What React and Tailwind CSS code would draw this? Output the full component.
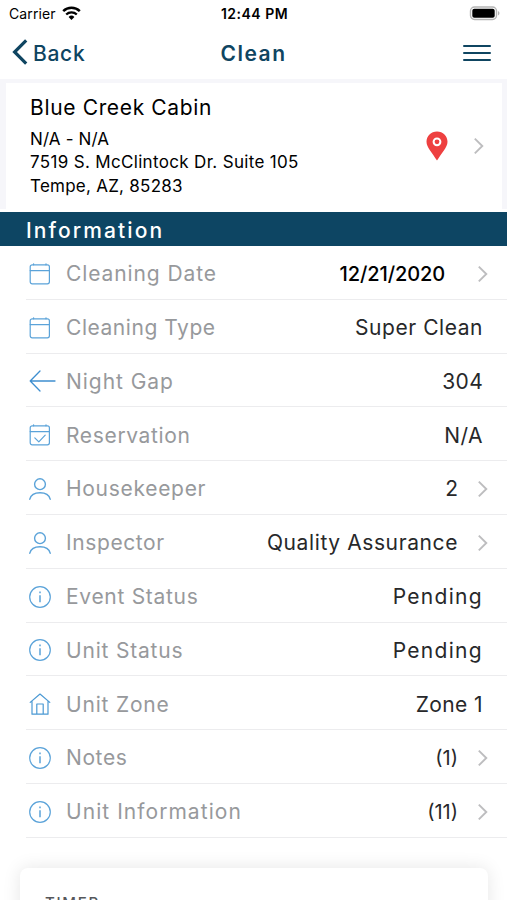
import React from 'react';

const CalendarIcon = ({ checked }) => (
    <svg width="22" height="22" viewBox="0 0 22 22" fill="none" stroke="#5ba3d9" strokeWidth="1.2" strokeLinecap="round" strokeLinejoin="round">
        <rect x="1.2" y="1.8" width="19.2" height="19" rx="2" />
        <path d="M1.2 7.6h19.2M4.6 .8v1M17 .8v1" />
        {checked && <path d="M5.8 13.8l4 4 6.4-6.6" />}
    </svg>
);

const ArrowIcon = () => (
    <svg width="27" height="22" viewBox="0 0 27 22" fill="none" stroke="#3f8fd0" strokeWidth="1.3" strokeLinecap="round" strokeLinejoin="round">
        <path d="M11 1L1.2 11 11 21M1.2 11h24.8" />
    </svg>
);

const PersonIcon = () => (
    <svg width="22" height="22" viewBox="0 0 22 22" fill="none" stroke="#5ba3d9" strokeWidth="1.4" strokeLinecap="round">
        <circle cx="11" cy="6.2" r="5.4" />
        <path d="M.8 21.2c1-4 5-6.4 10.2-6.4s9.2 2.4 10.2 6.4" />
    </svg>
);

const InfoIcon = () => (
    <svg width="22" height="22" viewBox="0 0 22 22" fill="none" stroke="#5ba3d9" strokeWidth="1.2">
        <circle cx="11" cy="11" r="10.3" />
        <path d="M11 9.2v7M11 5.6v1.7" strokeWidth="1.5" />
    </svg>
);

const HouseIcon = () => (
    <svg width="22" height="22" viewBox="0 0 22 22" fill="none" stroke="#4b99d4" strokeWidth="1.2" strokeLinecap="round" strokeLinejoin="round">
        <path d="M1.2 9.4L11 1l9.8 8.4M3 8v13.2h16V8M7.8 21.2V11h6.4v10.2" />
    </svg>
);

const Chevron = () => (
    <svg width="11" height="18" viewBox="0 0 11 18" fill="none" stroke="#bdbdbf" strokeWidth="1.9">
        <path d="M1.8 1.6L9.3 9l-7.5 7.4" />
    </svg>
);

const rows = [
    { label: 'Cleaning Date', value: '12/21/2020', icon: <CalendarIcon />, arrow: true, wide: true, labelClass: 'tracking-[0.9px]', valueClass: 'text-[20px] font-medium tracking-[-0.1px] text-black' },
    { label: 'Cleaning Type', value: 'Super Clean', icon: <CalendarIcon />, labelClass: 'tracking-[0.55px]', valueClass: 'tracking-[0.55px] text-[#27282a]' },
    { label: 'Night Gap', value: '304', icon: <ArrowIcon />, labelClass: 'tracking-[0.95px]', valueClass: 'tracking-[0.3px] text-[#27282a]' },
    { label: 'Reservation', value: 'N/A', icon: <CalendarIcon checked />, labelClass: 'tracking-[0.65px]', valueClass: 'tracking-[0.5px] text-[#27282a]' },
    { label: 'Housekeeper', value: '2', icon: <PersonIcon />, arrow: true, labelClass: 'tracking-[0.7px]', valueClass: 'text-[#27282a]' },
    { label: 'Inspector', value: 'Quality Assurance', icon: <PersonIcon />, arrow: true, labelClass: 'tracking-[0.6px]', valueClass: 'tracking-[0.6px] text-[#27282a]' },
    { label: 'Event Status', value: 'Pending', icon: <InfoIcon />, labelClass: 'tracking-[0.7px]', valueClass: 'tracking-[1.3px] text-[#27282a]' },
    { label: 'Unit Status', value: 'Pending', icon: <InfoIcon />, labelClass: 'tracking-[0.8px]', valueClass: 'tracking-[1.3px] text-[#27282a]' },
    { label: 'Unit Zone', value: 'Zone 1', icon: <HouseIcon />, labelClass: 'tracking-[0.8px]', valueClass: 'tracking-[0.4px] text-[#27282a]' },
    { label: 'Notes', value: '(1)', icon: <InfoIcon />, arrow: true, labelClass: 'tracking-[0.6px]', valueClass: 'text-[20px] text-[#27282a]' },
    { label: 'Unit Information', value: '(11)', icon: <InfoIcon />, arrow: true, labelClass: 'tracking-[1.05px]', valueClass: 'text-[20px] text-[#27282a]' },
];

const StatusBar = () => (
    <div className="grid grid-cols-3 items-center h-[27px] shrink-0 pl-[9px] pr-[7px] text-black">
        <div className="flex items-center gap-[6px]">
            <span className="text-[14px] tracking-[0.1px]">Carrier</span>
            <svg className="-mt-[2px]" width="19" height="14" viewBox="0 0 19 14">
                <path d="M1.2 5.2a12 12 0 0 1 16.6 0" fill="none" stroke="#000" strokeWidth="2.5" />
                <path d="M4.2 8.5a7.6 7.6 0 0 1 10.6 0" fill="none" stroke="#000" strokeWidth="2.3" />
                <path d="M9.5 14l-2.9-3.1a4.2 4.2 0 0 1 5.8 0z" />
            </svg>
        </div>
        <span className="text-center text-[14px] font-semibold tracking-[0.5px] whitespace-nowrap">12:44 PM</span>
        <svg className="justify-self-end" width="31" height="15" viewBox="0 0 31 15">
            <rect x="1.500" y="1" width="26" height="12.500" rx="4" fill="#fff" stroke="#b5b5b5" strokeWidth="1.4" />
            <rect x="3.3" y="2.8" width="22.4" height="8.900" rx="2" />
            <path d="M29 5.100c2 .8 2 3.6 0 4.4z" fill="#b5b5b5" />
        </svg>
    </div>
);

const NavBar = () => (
    <div className="grid grid-cols-3 items-center h-[52px] shrink-0 pl-[12px] pr-[16px] text-[#0f4561]">
        <div className="flex items-center gap-[5px]">
            <svg className="-mt-[2px]" width="16" height="26" viewBox="0 0 16 26" fill="none" stroke="#0f4561" strokeWidth="3.2">
                <path d="M14.2 1.4L2.6 13l11.6 11.6" />
            </svg>
            <span className="pt-[1px] text-[21px] font-medium tracking-[0.7px]">Back</span>
        </div>
        <span className="pt-[2px] text-center text-[21px] font-semibold tracking-[1.5px] pl-[4px]">Clean</span>
        <div className="justify-self-end flex flex-col gap-[5px] w-[28px]">
            <div className="h-[2.2px] rounded bg-[#0f4561]" />
            <div className="h-[2.2px] rounded bg-[#0f4561]" />
            <div className="h-[2.2px] rounded bg-[#0f4561]" />
        </div>
    </div>
);

const App = () => {
    return (
        <div className="w-[507px] h-[900px] overflow-hidden flex flex-col bg-white font-['Inter',sans-serif]">
            <StatusBar />
            <NavBar />
            <div className="h-[133px] shrink-0 bg-[#f6f6fa] border-b-[3px] border-white pt-[4px] pl-[6px] pr-[5px]">
                <div className="flex items-center h-full bg-white pl-[24px] pr-[18px] text-black">
                    <div className="flex-1 pt-[1px]">
                        <h2 className="text-[21px] leading-[26px] tracking-[0.65px]">Blue Creek Cabin</h2>
                        <div className="mt-[7px] text-[17px] leading-[23.3px]">
                            <p className="tracking-[0.15px]">N/A - N/A</p>
                            <p className="tracking-[0.33px]">7519 S. McClintock Dr. Suite 105</p>
                            <p className="tracking-[0.25px]">Tempe, AZ, 85283</p>
                        </div>
                    </div>
                    <svg className="mr-[25px]" width="22" height="30" viewBox="0 0 22 30">
                        <path d="M11 .4C5 .4.5 5 .5 10.7.5 16.5 6.5 22 11 29.6 15.5 22 21.5 16.5 21.5 10.7 21.5 5 17 .4 11 .4z" fill="#ee4040" />
                        <circle cx="11" cy="10.8" r="3.4" fill="none" stroke="#fff" strokeWidth="2" />
                    </svg>
                    <Chevron />
                </div>
            </div>
            <div className="flex items-center h-[34px] shrink-0 bg-[#0d4563] pl-[26px] pt-[3px] text-white text-[21px] font-medium tracking-[2.1px]">
                Information
            </div>
            <div className="shrink-0 pl-[26px]">
                {rows.map(row => (
                    <div key={row.label} className="flex items-center h-[53.8px] border-b-[1.5px] border-[#ececee] pl-[3px] pt-[3px] text-[21px]">
                        <div className="w-[37px] shrink-0">{row.icon}</div>
                        <span className={`flex-1 text-[#97999c] ${row.labelClass}`}>{row.label}</span>
                        <span className={`${row.wide ? 'mr-[32px]' : row.arrow ? 'mr-[19px]' : 'mr-[24px]'} ${row.valueClass}`}>{row.value}</span>
                        {row.arrow && <div className="mr-[19px]"><Chevron /></div>}
                    </div>
                ))}
            </div>
            <div className="mt-[30px] ml-[20px] w-[468px] h-[120px] shrink-0 rounded-[8px] bg-white shadow-[0_0_18px_rgba(0,0,0,0.1)] pt-[24px] pl-[25px] text-[#55575a] text-[15px] leading-[22px] font-medium tracking-[1.7px]">
                TIMER
            </div>
        </div>
    );
};

export default App;
